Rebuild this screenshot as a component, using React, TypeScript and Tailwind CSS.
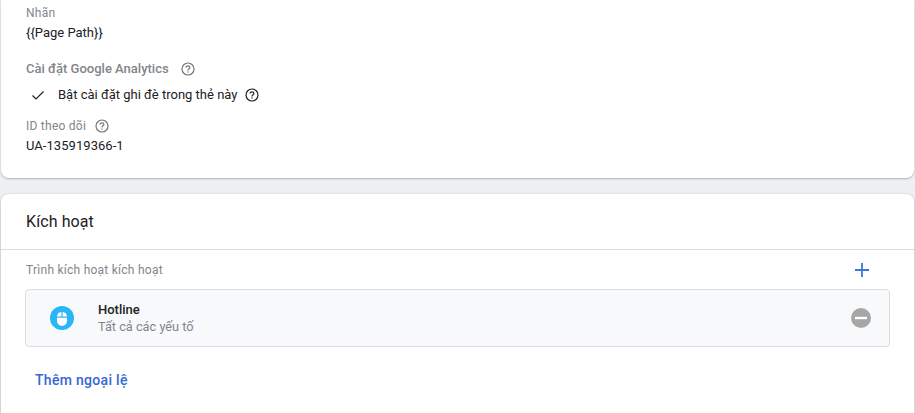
import React from "react";

function Help({ dark = false }: { dark?: boolean }) {
  const c = dark ? "#212121" : "#757575";
  return (
    <svg width="14" height="14" viewBox="0 0 14 14" fill="none" className="shrink-0">
      <circle cx="7" cy="7" r="6" stroke={c} strokeWidth="1.2" />
      <path d="M5.1 5.6c0-1.1.9-1.8 1.9-1.8s1.9.7 1.9 1.7c0 1.3-1.9 1.4-1.9 2.9" stroke={c} strokeWidth="1.2" />
      <rect x="6.4" y="9.4" width="1.2" height="1.2" fill={c} />
    </svg>
  );
}

export default function App() {
  return (
    <div className="h-[413px] w-[915px] overflow-hidden bg-[#eeeff0] px-[1px] font-['Roboto',sans-serif]">
      <div className="h-[178px] rounded-b-lg bg-white pl-[25px] pt-[5px] shadow-[0_1px_2px_rgba(0,0,0,0.25)]">
        <div className="text-[12px] leading-[16px] tracking-[0.25px] text-[#80868b]">Nhãn</div>
        <div className="mt-[4px] text-[13px] leading-[16px] text-[#202124]">{"{{Page Path}}"}</div>
        <div className="mt-[20px] flex items-center gap-[12px] text-[13px] font-medium leading-[16px] text-[#80868b]">
          <span>Cài đặt Google Analytics</span>
          <Help />
        </div>
        <div className="mt-[10px] flex items-center text-[13px] leading-[16px] text-[#202124]">
          <svg width="14" height="14" viewBox="0 0 14 14" fill="none" className="ml-[5px] shrink-0">
            <path d="M1.5 7.5 5 11 12.5 3.5" stroke="#212121" strokeWidth="1.2" />
          </svg>
          <span className="ml-[13px]">Bật cài đặt ghi đè trong thẻ này</span>
          <span className="ml-[8px]"><Help dark /></span>
        </div>
        <div className="mt-[15px] flex items-center gap-[9px] text-[12px] leading-[16px] tracking-[0.25px] text-[#80868b]">
          <span>ID theo dõi</span>
          <Help />
        </div>
        <div className="mt-[4px] text-[13px] leading-[16px] tracking-[0.05px] text-[#202124]">UA-135919366-1</div>
      </div>

      <div className="mt-[16px] h-[240px] rounded-t-lg bg-white shadow-[0_1px_3px_rgba(0,0,0,0.3)]">
        <div className="flex h-[56px] items-center border-b border-[#dadce0] pl-[25px] text-[16px] tracking-[0.1px] text-[#202124]">
          Kích hoạt
        </div>
        <div className="pl-[24px] pr-[24px]">
          <div className="flex h-[39px] items-center justify-between pl-[1px]">
            <span className="text-[12px] tracking-[0.25px] text-[#80868b]">Trình kích hoạt kích hoạt</span>
            <svg width="16" height="16" viewBox="0 0 16 16" className="mr-[20px]">
              <path d="M8 1v14M1 8h14" stroke="#3b78d8" strokeWidth="1.8" fill="none" />
            </svg>
          </div>
          <div className="flex h-[58px] items-center justify-between rounded border border-[#dadce0] bg-[#f8f9fa] pl-[24px] pr-[18px]">
            <div className="flex items-center">
              <div className="flex h-[24px] w-[24px] items-center justify-center rounded-full bg-[#29b6f6]">
                <svg width="12" height="15" viewBox="0 0 12 15">
                  <path d="M1 5.5A5 5 0 0 1 5.4 1v4.5ZM6.6 1A5 5 0 0 1 11 5.5H6.6ZM1 6.8h10V10a5 5 0 0 1-10 0Z" fill="#fff" />
                </svg>
              </div>
              <div className="ml-[24px]">
                <div className="text-[13px] font-medium leading-[17px] text-[#202124]">Hotline</div>
                <div className="text-[12.75px] leading-[17px] text-[#80868b]">Tất cả các yếu tố</div>
              </div>
            </div>
            <svg width="20" height="20" viewBox="0 0 20 20">
              <circle cx="10" cy="10" r="10" fill="#a6a6a6" />
              <rect x="4" y="8.8" width="12" height="2.4" fill="#fff" />
            </svg>
          </div>
          <div className="ml-[10px] mt-[23px] text-[14px] font-medium leading-[20px] tracking-[0.3px] text-[#3367d6]">Thêm ngoại lệ</div>
        </div>
      </div>
    </div>
  );
}
